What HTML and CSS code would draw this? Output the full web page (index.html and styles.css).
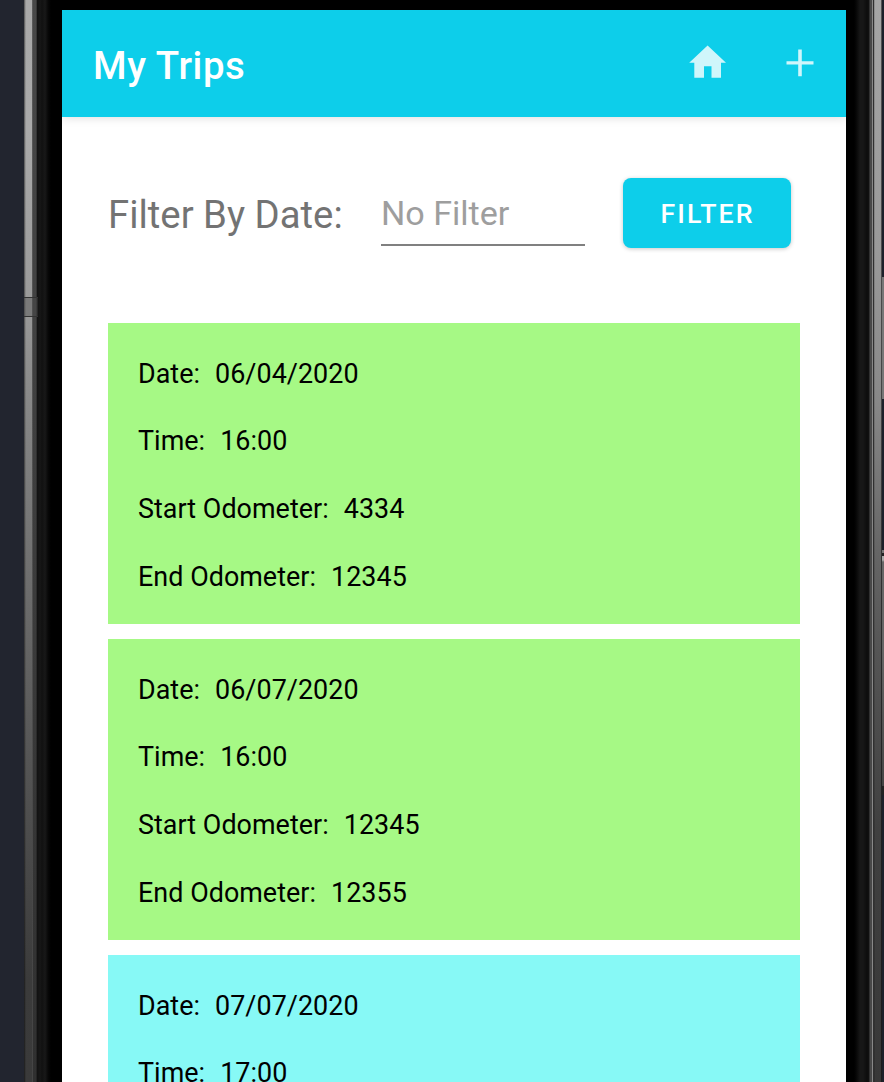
FILE: index.html
```html
<!DOCTYPE html>
<html lang="en">
<head>
<meta charset="utf-8">
<title>My Trips</title>
<link rel="stylesheet" href="styles.css">
</head>
<body>
<div class="stage">
  <div class="edge edge-left"><div class="metal"></div><div class="seam"></div><div class="rim"></div><span class="antenna"></span></div>
  <main class="screen">
    <header class="app-bar">
      <h1 class="title">My Trips</h1>
      <svg class="icon home" viewBox="0 0 38 34"><path d="M18.600 0.600 37 17.700H32V32.800H22.500V21.200H15V32.800H5.300V17.700H.2Z"/></svg>
      <svg class="icon plus" viewBox="0 0 28 28"><path d="M12.200.5h3.600v11.700h11.700v3.300H15.800v11.700h-3.600V15.500H.5v-3.300h11.700z"/></svg>
    </header>
    <section class="filter">
      <label class="filter-label" for="date">Filter By Date:</label>
      <input class="filter-input" id="date" placeholder="No Filter">
      <button class="filter-button">FILTER</button>
    </section>
    <section class="trips">
      <article class="trip">
        <p class="row"><span>Date:</span><span>06/04/2020</span></p>
        <p class="row"><span>Time:</span><span>16:00</span></p>
        <p class="row"><span>Start Odometer:</span><span>4334</span></p>
        <p class="row"><span>End Odometer:</span><span>12345</span></p>
      </article>
      <article class="trip">
        <p class="row"><span>Date:</span><span>06/07/2020</span></p>
        <p class="row"><span>Time:</span><span>16:00</span></p>
        <p class="row"><span>Start Odometer:</span><span>12345</span></p>
        <p class="row"><span>End Odometer:</span><span>12355</span></p>
      </article>
      <article class="trip trip-blue">
        <p class="row"><span>Date:</span><span>07/07/2020</span></p>
        <p class="row"><span>Time:</span><span>17:00</span></p>
      </article>
    </section>
  </main>
  <div class="edge edge-right"><div class="rim"></div><div class="seam"></div><div class="metal"></div><div class="side-keys"></div></div>
</div>
</body>
</html>
```
FILE: styles.css
```css
* { box-sizing: border-box; }
body { margin: 0; background: #22252f; font-family: Roboto, sans-serif; overflow: hidden; }
.stage { display: flex; width: 884px; height: 1082px; overflow: hidden; background: linear-gradient(90deg, #22252f 24px, #000 24px); }
.edge { display: flex; position: relative; height: 1082px; flex: none; }
.edge-left { width: 62px; padding-left: 24px; }
.edge-right { width: 38px; }
.edge-left .metal {
  width: 8px;
  background:
    linear-gradient(90deg, rgba(0,0,0,.4) 0 1px, rgba(0,0,0,.12) 1px 2px, transparent 2px),
    linear-gradient(#a9a9a9 0, #aaa 130px, #999 310px, #888 400px, #727272 550px, #555 760px, #3b3b3b 980px, #3a3a3a);
}
.edge-left .seam {
  width: 5px;
  background:
    linear-gradient(90deg, rgba(255,255,255,.1) 0 1px, transparent 1px 4px, rgba(0,0,0,.25) 4px),
    linear-gradient(#484848, #3c3c3c 550px, #303030);
}
.edge-left .rim { width: 25px; background: linear-gradient(90deg, #111 0, #171717 3px, #111 5px, #181818 8px, #080808 11px, #000 14px); }
.antenna { position: absolute; left: 24px; top: 297px; width: 14px; height: 20px; border: solid #333; border-width: 1px 0; background: rgba(75,75,75,.4); }
.edge-right .rim { width: 23px; background: linear-gradient(90deg, #000 8px, #060606 10px, #171717 14px, #171717 17px, #0d0d0d 21px, #111); }
.edge-right .seam {
  width: 5px;
  background: linear-gradient(90deg, #303030 0 1px, #484848 1px 3px, #888 3px 4px, #303030 4px);
}
.edge-right .metal {
  width: 8px;
  background:
    linear-gradient(90deg, rgba(0,0,0,.15) 0 1px, transparent 1px 7px, rgba(0,0,0,.5) 7px),
    linear-gradient(#a5a5a5, #999 250px, #888 400px, #666 550px, #555 650px, #404040 830px, #383838);
}
.side-keys {
  width: 2px;
  background: linear-gradient(#1c202a 0 277px, #777 277px 399px, #1c202a 399px 550px, #777 550px 553px, #222 553px 556px, #aaa 556px 560px, #666 562px 650px, #454545 786px, #222 786px 795px, #1c202a 795px);
}
.screen { width: 784px; height: 1072px; margin-top: 10px; background: #fff; overflow: hidden; }
.app-bar {
  display: flex; align-items: flex-start; height: 107px; padding: 0 32px 0 31px;
  background: #0dceea; box-shadow: 0 1px 9px rgba(0,0,0,.13);
}
.title { margin: 0 auto 0 0; padding-top: 33px; font-size: 38.4px; line-height: 46px; font-weight: 500; letter-spacing: .58px; color: #fff; }
.icon { fill: #cff6fb; flex: none; }
.home { width: 38px; height: 34px; margin: 35px 59px 0 0; }
.plus { width: 28px; height: 28px; margin-top: 39px; }
.filter { display: flex; align-items: flex-start; height: 206px; padding: 61px 55px 0 46px; }
.filter-label { width: 273px; padding-top: 14px; font-size: 38.3px; line-height: 46px; color: #737373; white-space: nowrap; }
.filter-input {
  width: 204px; height: 68px; padding: 3px 0 0; border: 0; border-bottom: 2px solid #808080; border-radius: 0;
  background: none; font: 34.1px/46px Roboto, sans-serif; color: #333;
}
.filter-input::placeholder { color: #9e9e9e; }
.filter-button {
  width: 168px; height: 69.500px; margin-left: auto; padding: 2px 0 0 1px; border: 0; border-radius: 8px; background: #0dceea;
  color: #fff; font: 500 26.7px/32px Roboto, sans-serif; letter-spacing: 2.1px;
  box-shadow: 0 1px 4px rgba(0,0,0,.22);
}
.trips { display: flex; flex-direction: column; gap: 15px; padding: 0 46px; }
.trip { height: 301px; padding: 17px 30px; background: #a6f985; }
.trip-blue { background: #87f9f6; }
.row { display: flex; gap: 15px; align-items: center; height: 67.6px; margin: 0; font-size: 26.9px; letter-spacing: .04px; color: #000; white-space: nowrap; }
```
